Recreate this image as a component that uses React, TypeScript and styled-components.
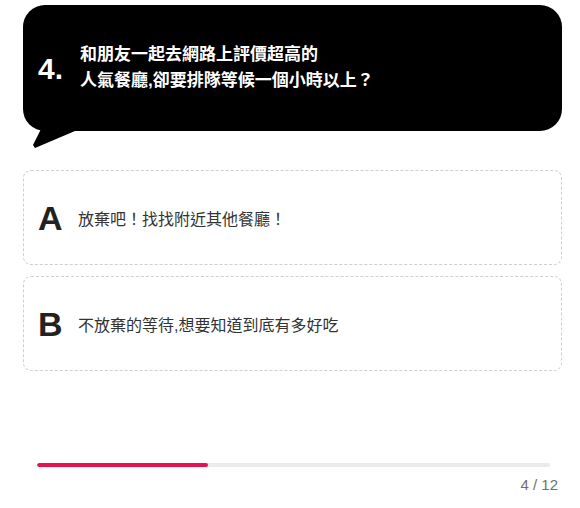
import React from 'react';
import styled, { createGlobalStyle } from 'styled-components';

const GlobalStyle = createGlobalStyle`
  html, body {
    margin: 0;
    padding: 0;
    background: #fff;
  }
  body {
    font-family: "Liberation Sans", "Noto Sans CJK TC", sans-serif;
  }
`;

const Page = styled.div`
  width: 539px;
  margin: 0 0 0 23px;
  padding-top: 5px;
`;

const Bubble = styled.div`
  position: relative;
  height: 126px;
  background: #000;
  border-radius: 22px;
  display: flex;
  align-items: center;
  padding-left: 15px;
  gap: 10px;
  color: #fff;

  &::after {
    content: '';
    position: absolute;
    left: 10px;
    top: 120px;
    width: 42px;
    height: 24px;
    background: #000;
    clip-path: polygon(10px 0, 42px 0, 42px 6px, 2px 23px, 0 20px);
  }
`;

const Number = styled.div`
  font-size: 30px;
  font-weight: 700;
  line-height: 1;
  margin-top: 2px;
  width: 32px;
`;

const Question = styled.div`
  font-size: 17px;
  font-weight: 700;
  line-height: 26px;
`;

const Options = styled.div`
  display: flex;
  flex-direction: column;
  gap: 11px;
  margin-top: 39px;
`;

const Option = styled.div`
  height: 95px;
  box-sizing: border-box;
  border: 1px dashed #cfcfcf;
  border-radius: 8px;
  display: flex;
  align-items: center;
  padding-left: 14px;
  gap: 14px;
  cursor: pointer;
`;

const Letter = styled.span`
  font-size: 34px;
  font-weight: 700;
  color: #222;
  line-height: 1;
  width: 26px;
`;

const Answer = styled.span`
  font-size: 16px;
  color: #333;
`;

const Track = styled.div`
  margin: 92px 12px 0 14px;
  height: 4px;
  border-radius: 2px;
  background: #ebebeb;
  overflow: hidden;
`;

const Fill = styled.div`
  height: 100%;
  border-radius: 2px;
  background: #e5124f;
`;

const Counter = styled.div`
  text-align: right;
  padding-right: 4px;
  margin-top: 9px;
  font-size: 15px;
  color: #707070;
`;

const options = [
  { key: 'A', text: '放棄吧！找找附近其他餐廳！' },
  { key: 'B', text: '不放棄的等待,想要知道到底有多好吃' },
];

export default function App() {
  const current = 4;
  const total = 12;
  return (
    <>
      <GlobalStyle />
      <Page>
        <Bubble>
          <Number>{current}.</Number>
          <Question>
            和朋友一起去網路上評價超高的
            <br />
            人氣餐廳,卻要排隊等候一個小時以上？
          </Question>
        </Bubble>
        <Options>
          {options.map((o) => (
            <Option key={o.key}>
              <Letter>{o.key}</Letter>
              <Answer>{o.text}</Answer>
            </Option>
          ))}
        </Options>
        <Track>
          <Fill style={{ width: `${(current / total) * 100}%` }} />
        </Track>
        <Counter>
          {current} / {total}
        </Counter>
      </Page>
    </>
  );
}
